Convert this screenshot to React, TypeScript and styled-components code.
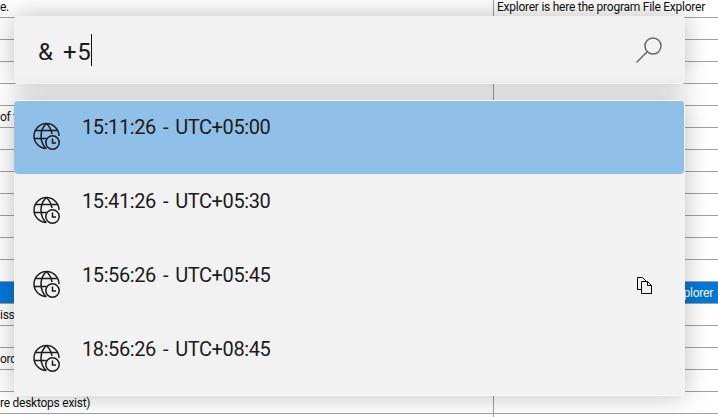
import { FC } from 'react';
import styled, { createGlobalStyle } from 'styled-components';

const GlobalStyle = createGlobalStyle`
  html, body {
    margin: 0;
    padding: 0;
    width: 718px;
    height: 417px;
    overflow: hidden;
    background: #fff;
    font-family: Roboto, "Open Sans", sans-serif;
  }
`;

const sheetRows: { left?: string; right?: string; selected?: boolean }[] = [
  { left: 'e.', right: 'Explorer is here the program File Explorer' },
  {},
  {},
  {},
  {},
  { left: 'of t' },
  {},
  {},
  {},
  {},
  {},
  {},
  {},
  { selected: true, right: 'File Explorer' },
  { left: 'issi' },
  {},
  { left: 'orc' },
  {},
  { left: 're desktops exist)' },
  {},
];

const results = [
  { text: '15:11:26 - UTC+05:00', active: true },
  { text: '15:41:26 - UTC+05:30' },
  { text: '15:56:26 - UTC+05:45', copy: true },
  { text: '18:56:26 - UTC+08:45' },
];

const GlobeClock: FC = () => (
  <svg width="30" height="30" viewBox="0 0 30 30" fill="none" stroke="#1b1b1b" strokeWidth="1.5">
    <path d="M14.5 27.5A12.5 12.5 0 1 1 27 15" />
    <path d="M14.5 2.5C10.5 6 9 10.5 9 15s1.5 9 5 12.5" />
    <path d="M14.5 2.5C17.5 5.5 19.5 9.5 20 13" />
    <path d="M3.5 9.5h22M2.5 17.5h12" />
    <circle cx="20.5" cy="21.5" r="6.7" />
    <path d="M20.5 17.5v4.5h3.5" />
  </svg>
);

const SearchGlass: FC = () => (
  <svg width="30" height="30" viewBox="0 0 30 30" fill="none" stroke="#666" strokeWidth="1.5">
    <circle cx="18" cy="11" r="8" />
    <path d="M12.2 16.8L1.5 27.5" />
  </svg>
);

const CopyGlyph: FC = () => (
  <svg width="15" height="17" viewBox="0 0 15 17" fill="none" stroke="#000" strokeWidth="1">
    <path d="M4.5 12.5h-4v-12h5l4 4" />
    <path d="M4.5 4.5h6l4 4v8h-10z" fill="#f2f2f2" />
    <path d="M10.5 4.5v4h4" />
  </svg>
);

const App: FC = () => (
  <Root>
    <GlobalStyle />
    <Sheet>
      {sheetRows.map((row, i) => (
        <SheetRow key={i} $selected={row.selected}>
          <LeftCell>{row.left}</LeftCell>
          <RightCell $alignEnd={row.selected}>{row.right}</RightCell>
        </SheetRow>
      ))}
    </Sheet>
    <Launcher>
      <SearchBar>
        <Query>
          <QueryText>&amp; +5</QueryText>
          <Caret />
        </Query>
        <SearchGlass />
      </SearchBar>
      <ResultList>
        {results.map((r) => (
          <ResultRow key={r.text} $active={r.active}>
            <IconSlot>
              <GlobeClock />
            </IconSlot>
            <ResultText>{r.text}</ResultText>
            {r.copy && (
              <CopySlot>
                <CopyGlyph />
              </CopySlot>
            )}
          </ResultRow>
        ))}
      </ResultList>
    </Launcher>
  </Root>
);

const Root = styled.div`
  position: relative;
  width: 718px;
  height: 417px;
  overflow: hidden;
`;

const Sheet = styled.div`
  display: flex;
  flex-direction: column;
  margin-top: -4px;
  font-size: 12px;
  letter-spacing: -0.25px;
`;

const SheetRow = styled.div<{ $selected?: boolean }>`
  display: grid;
  grid-template-columns: 493px 1fr;
  height: 22px;
  flex: none;
  box-sizing: border-box;
  border-bottom: 1px solid #a0a0a0;
  line-height: 22px;
  background: ${(p) => (p.$selected ? '#0078d7' : 'transparent')};
  color: ${(p) => (p.$selected ? '#fff' : '#111')};
`;

const LeftCell = styled.div`
  white-space: nowrap;
`;

const RightCell = styled.div<{ $alignEnd?: boolean }>`
  border-left: 1px solid #a0a0a0;
  padding: 0 5px 0 3px;
  white-space: nowrap;
  text-align: ${(p) => (p.$alignEnd ? 'right' : 'left')};
`;

const Launcher = styled.div`
  position: absolute;
  left: 14px;
  top: 16px;
  width: 671px;
  display: flex;
  flex-direction: column;
  gap: 16px;
`;

const SearchBar = styled.div`
  height: 68px;
  box-sizing: border-box;
  display: flex;
  align-items: center;
  justify-content: space-between;
  padding: 0 20px 0 24px;
  background: #f2f2f2;
  border-radius: 4px;
  box-shadow: 0 0 26px rgba(0, 0, 0, 0.26), inset 0 -1px 0 #f8f8f8;
`;

const Query = styled.div`
  display: flex;
  align-items: flex-start;
  height: 32px;
`;

const QueryText = styled.span`
  font-size: 24px;
  line-height: 36px;
  letter-spacing: 0.6px;
  word-spacing: 3px;
  color: #1b1b1b;
  white-space: pre;
`;

const Caret = styled.span`
  width: 1px;
  height: 32px;
  background: #111;
`;

const ResultList = styled.div`
  height: 296px;
  display: flex;
  flex-direction: column;
  background: #f2f2f2;
  border-radius: 4px;
  box-shadow: 0 0 26px rgba(0, 0, 0, 0.26), inset 0 -1px 0 #f8f8f8;
`;

const ResultRow = styled.div<{ $active?: boolean }>`
  position: relative;
  height: 74px;
  flex: none;
  display: flex;
  align-items: flex-start;
  background: ${(p) => (p.$active ? '#90bfe7' : 'transparent')};
  border-radius: ${(p) => (p.$active ? '4px' : '0')};
  box-shadow: ${(p) => (p.$active ? 'inset 0 1px 0 #f8f8f8, inset -1px 0 0 #f2f2f2' : 'none')};
`;

const IconSlot = styled.div`
  display: flex;
  padding: 21px 0 0 18px;
  width: 50px;
  box-sizing: border-box;
`;

const ResultText = styled.div`
  margin-left: 18px;
  padding-top: 13px;
  font-size: 20px;
  line-height: 28px;
  letter-spacing: -0.4px;
  word-spacing: 2.5px;
  color: #1b1b1b;
`;

const CopySlot = styled.div`
  position: absolute;
  right: 33px;
  top: 29px;
  display: flex;
`;

export default App;
